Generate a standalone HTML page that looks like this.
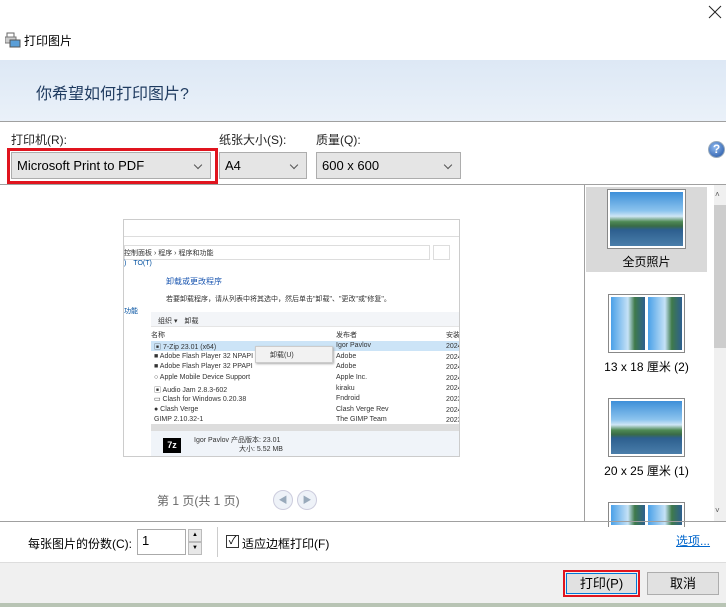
<!DOCTYPE html>
<html><head><meta charset="utf-8"><style>
*{margin:0;padding:0;box-sizing:border-box}
body{width:726px;height:607px;position:relative;overflow:hidden;background:#fff;font-family:"Liberation Sans","Noto Sans CJK SC",sans-serif;font-size:12px;color:#000}
.a{position:absolute}
.combo{position:absolute;background:#e5e5e5;border:1px solid #adadad;font-size:13px;padding:5px 0 0 5px;height:27px}
.combo:after{content:"";position:absolute;right:9px;top:9px;width:5px;height:5px;border-right:1px solid #555;border-bottom:1px solid #555;transform:rotate(45deg)}
.lbl{position:absolute;font-size:12px;color:#222}
.thumb{position:absolute;border:1px solid #888;background:#fff;padding:2px}
.sky{width:100%;height:100%;background:linear-gradient(180deg,#3d8fd8 0%,#8cc4ee 35%,#cfe6f5 45%,#4f8a55 55%,#3a6b46 63%,#2d5f8f 70%,#4a7eaa 100%)}
.sky2{width:48%;height:100%;float:left;background:linear-gradient(90deg,#4aa0e8 0%,#c5e2f6 50%,#3f7a4a 70%,#2d5f8f 100%)}
.t{position:absolute;font-size:7px;color:#333;white-space:nowrap}
</style></head><body>
<svg class="a" style="left:708px;top:5px" width="14" height="14"><path d="M1 1L13 13M13 1L1 13" stroke="#222" stroke-width="1"/></svg>
<svg class="a" style="left:5px;top:32px" width="16" height="16"><rect x="2" y="1" width="7" height="5" fill="#fff" stroke="#666"/><rect x="0" y="5" width="11" height="6" fill="#ccc" stroke="#777"/><rect x="5" y="8" width="10" height="7" fill="#5b9fd8" stroke="#555"/></svg>
<div class="a" style="left:24px;top:32px;font-size:12px">打印图片</div>
<div class="a" style="left:0;top:60px;width:726px;height:61px;background:linear-gradient(#dde8f5,#eaf1f9)"></div>
<div class="a" style="left:36px;top:80px;font-size:16px;color:#1e3a5f">你希望如何打印图片?</div>
<div class="a" style="left:0;top:121px;width:726px;height:1px;background:#a0a0a0"></div>
<div class="lbl" style="left:11px;top:131px">打印机(R):</div>
<div class="lbl" style="left:219px;top:131px">纸张大小(S):</div>
<div class="lbl" style="left:316px;top:131px">质量(Q):</div>
<div class="a" style="left:7px;top:148px;width:211px;height:36px;border:3px solid #e0141e"></div>
<div class="combo" style="left:11px;top:152px;width:200px">Microsoft Print to PDF</div>
<div class="combo" style="left:219px;top:152px;width:88px">A4</div>
<div class="combo" style="left:316px;top:152px;width:145px">600 x 600</div>
<div class="a" style="left:708px;top:141px;width:17px;height:17px;border-radius:50%;border:1px solid #9ab;background:radial-gradient(circle at 40% 35%,#8fbaf0,#1d4fa0);color:#fff;font-weight:bold;font-size:12px;text-align:center;line-height:15px">?</div>
<div class="a" style="left:0;top:184px;width:726px;height:1px;background:#a0a0a0"></div>
<div class="a" style="left:123px;top:219px;width:337px;height:238px;border:1px solid #ccc;background:#fff;overflow:hidden">
 <div class="a" style="left:0;top:16px;width:335px;height:1px;background:#ddd"></div>
 <div class="a" style="left:0;top:25px;width:306px;height:15px;border:1px solid #ddd"></div>
 <div class="a" style="left:309px;top:25px;width:17px;height:15px;border:1px solid #ddd"></div>
 <div class="t" style="left:0;top:28px">控制面板 › 程序 › 程序和功能</div>
 <div class="t" style="left:0;top:38px;color:#0050a0">)　TO(T)</div>
 <div class="t" style="left:42px;top:56px;font-size:8px;color:#1a56b0">卸载或更改程序</div>
 <div class="t" style="left:42px;top:74px">若要卸载程序，请从列表中将其选中，然后单击"卸载"、"更改"或"修复"。</div>
 <div class="t" style="left:0;top:86px;color:#0050a0">功能</div>
 <div class="a" style="left:27px;top:92px;width:310px;height:14px;background:#f3f5f8"></div>
 <div class="t" style="left:34px;top:96px">组织 ▾　卸载</div>
 <div class="a" style="left:27px;top:106px;width:310px;height:1px;background:#e5e5e5"></div>
 <div class="t" style="left:27px;top:110px">名称</div><div class="t" style="left:212px;top:110px">发布者</div><div class="t" style="left:322px;top:110px">安装</div>
 <div class="a" style="left:27px;top:121px;width:310px;height:10px;background:#cce4f7"></div>
 <div class="t" style="left:30px;top:122px">▣ 7-Zip 23.01 (x64)</div><div class="t" style="left:212px;top:122px">Igor Pavlov</div>
 <div class="t" style="left:30px;top:133px">■ Adobe Flash Player 32 NPAPI</div><div class="t" style="left:212px;top:133px">Adobe</div>
 <div class="t" style="left:30px;top:143px">■ Adobe Flash Player 32 PPAPI</div><div class="t" style="left:212px;top:143px">Adobe</div>
 <div class="t" style="left:30px;top:154px">○ Apple Mobile Device Support</div><div class="t" style="left:212px;top:154px">Apple Inc.</div>
 <div class="t" style="left:30px;top:165px">▣ Audio Jam 2.8.3-602</div><div class="t" style="left:212px;top:165px">kiraku</div>
 <div class="t" style="left:30px;top:175px">▭ Clash for Windows 0.20.38</div><div class="t" style="left:212px;top:175px">Fndroid</div>
 <div class="t" style="left:30px;top:186px">● Clash Verge</div><div class="t" style="left:212px;top:186px">Clash Verge Rev</div>
 <div class="t" style="left:30px;top:196px">GIMP 2.10.32-1</div><div class="t" style="left:212px;top:196px">The GIMP Team</div>
 <div class="t" style="left:322px;top:122px;line-height:10.6px">2024<br>2024<br>2024<br>2024<br>2024<br>2023<br>2024<br>2023</div>
 <div class="a" style="left:131px;top:126px;width:78px;height:17px;background:#f2f2f2;border:1px solid #ccc;box-shadow:1px 1px 2px #aaa"></div>
 <div class="t" style="left:146px;top:130px">卸载(U)</div>
 <div class="a" style="left:27px;top:204px;width:310px;height:7px;background:#ddd"></div>
 <div class="a" style="left:27px;top:211px;width:310px;height:27px;background:#f0f4f9"></div>
 <div class="a" style="left:39px;top:218px;width:18px;height:15px;background:#000;color:#fff;font-size:9px;font-weight:bold;text-align:center;line-height:15px">7z</div>
 <div class="t" style="left:70px;top:215px">Igor Pavlov 产品版本: 23.01</div>
 <div class="t" style="left:115px;top:224px">大小: 5.52 MB</div>
</div>
<div class="a" style="left:157px;top:492px;font-size:12px;color:#666">第 1 页(共 1 页)</div>
<div class="a" style="left:273px;top:490px;width:20px;height:20px;border-radius:50%;border:1px solid #ccd;background:#eef2f8;color:#9ab;font-size:9px;text-align:center;line-height:18px">◀</div>
<div class="a" style="left:297px;top:490px;width:20px;height:20px;border-radius:50%;border:1px solid #ccd;background:#eef2f8;color:#9ab;font-size:9px;text-align:center;line-height:18px">▶</div>
<div class="a" style="left:584px;top:185px;width:1px;height:336px;background:#a0a0a0"></div>
<div class="a" style="left:586px;top:187px;width:121px;height:85px;background:#d9d9d9"></div>
<div class="thumb" style="left:607px;top:189px;width:79px;height:60px"><div class="sky"></div></div>
<div class="a" style="left:586px;top:253px;width:121px;text-align:center;font-size:12px">全页照片</div>
<div class="thumb" style="left:608px;top:294px;width:77px;height:59px"><div class="sky2"></div><div class="sky2" style="margin-left:4%"></div></div>
<div class="a" style="left:586px;top:358px;width:121px;text-align:center;font-size:12px">13 x 18 厘米 (2)</div>
<div class="thumb" style="left:608px;top:398px;width:77px;height:59px"><div class="sky"></div></div>
<div class="a" style="left:586px;top:462px;width:121px;text-align:center;font-size:12px">20 x 25 厘米 (1)</div>
<div class="thumb" style="left:608px;top:502px;width:77px;height:25px;border-bottom:none"><div class="sky2"></div><div class="sky2" style="margin-left:4%"></div></div>
<div class="a" style="left:714px;top:185px;width:12px;height:336px;background:#f0f0f0"></div>
<div class="a" style="left:714px;top:205px;width:12px;height:143px;background:#cdcdcd"></div>
<div class="a" style="left:715px;top:190px;font-size:8px;color:#555">˄</div>
<div class="a" style="left:715px;top:506px;font-size:8px;color:#555">˅</div>
<div class="a" style="left:0;top:521px;width:726px;height:1px;background:#a0a0a0"></div>
<div class="a" style="left:28px;top:535px;font-size:12px">每张图片的份数(C):</div>
<div class="a" style="left:137px;top:529px;width:49px;height:26px;border:1px solid #aaa;font-size:13px;padding:3px 0 0 4px">1</div>
<div class="a" style="left:188px;top:529px;width:14px;height:13px;background:#e8e8e8;border:1px solid #bbb;font-size:6px;text-align:center;line-height:11px">▲</div>
<div class="a" style="left:188px;top:542px;width:14px;height:13px;background:#e8e8e8;border:1px solid #bbb;font-size:6px;text-align:center;line-height:11px">▼</div>
<div class="a" style="left:217px;top:527px;width:1px;height:30px;background:#ccc"></div>
<div class="a" style="left:226px;top:535px;width:13px;height:13px;border:1px solid #333;font-size:11px;line-height:11px;text-align:center">✓</div>
<div class="a" style="left:242px;top:535px;font-size:12px">适应边框打印(F)</div>
<div class="a" style="left:676px;top:532px;font-size:12px;color:#0066cc;text-decoration:underline">选项...</div>
<div class="a" style="left:0;top:562px;width:726px;height:45px;background:#f0f0f0;border-top:1px solid #ddd"></div>
<div class="a" style="left:563px;top:570px;width:77px;height:27px;border:2px solid #e0141e"></div>
<div class="a" style="left:566px;top:573px;width:71px;height:21px;background:#e1e1e1;border:1px solid #0078d7;text-align:center;line-height:19px;font-size:13px">打印(P)</div>
<div class="a" style="left:647px;top:572px;width:72px;height:23px;background:#e1e1e1;border:1px solid #adadad;text-align:center;line-height:21px;font-size:13px">取消</div>
<div class="a" style="left:0;top:603px;width:726px;height:4px;background:#b8c4b4"></div>
</body></html>
